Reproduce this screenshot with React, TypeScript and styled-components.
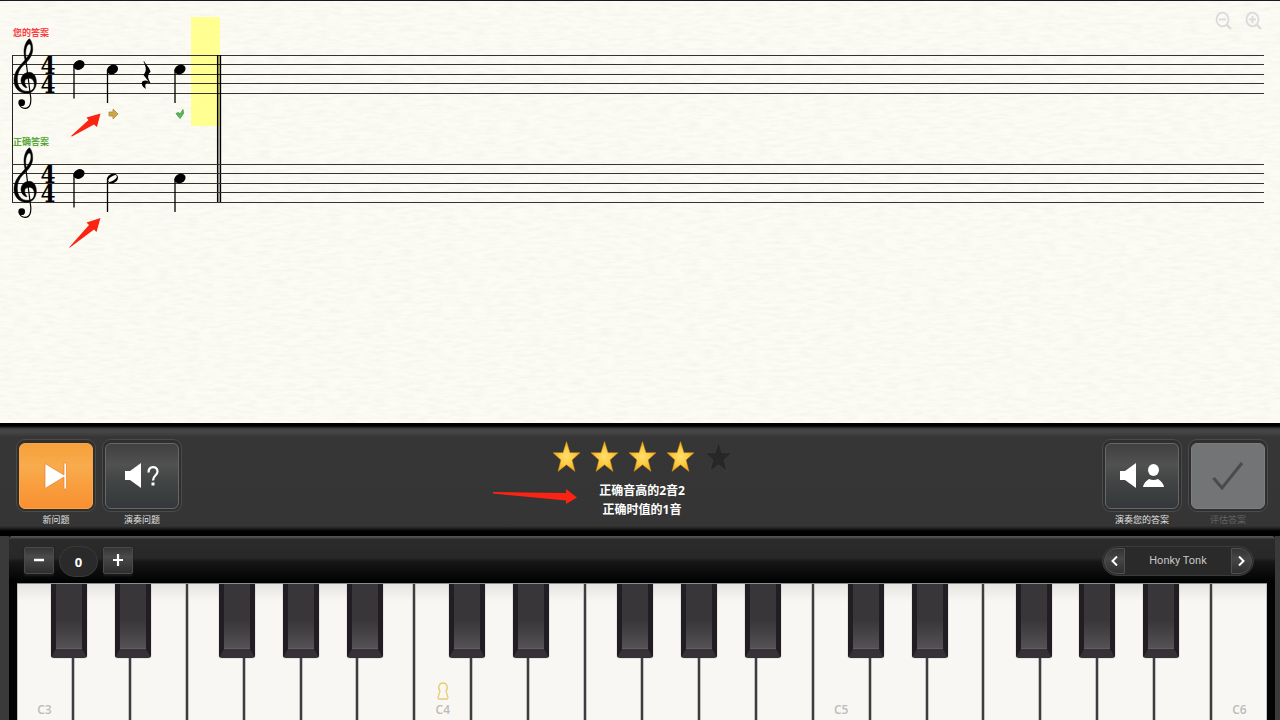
import React from 'react';
import styled, { createGlobalStyle, css } from 'styled-components';

const GlobalStyle = createGlobalStyle`
  * { box-sizing: border-box; }
  body {
    margin: 0;
    background: #000;
    font-family: 'Open Sans', 'Noto Sans CJK SC', sans-serif;
  }
  button { font: inherit; margin: 0; padding: 0; border: 0; cursor: pointer; }
`;

const Page = styled.div`
  display: flex;
  flex-direction: column;
  min-height: 100vh;
`;

/* ---------- Score ---------- */

const Score = styled.main`
  position: relative;
  flex: 1;
  overflow: hidden;
  padding: 25px 16px 0 12px;
  background: #fcfcf4;
  border-top: 1px solid #1b1828;
`;

const PaperGrain = styled.svg`
  position: absolute;
  inset: 0;
  width: 100%;
  height: 100%;
`;

const WindowTab = styled.div`
  position: absolute;
  z-index: 1;
  top: -1px;
  left: 48px;
  width: 42px;
  height: 1px;
  background: #a9a9ae;
`;

const ZoomTools = styled.div`
  position: absolute;
  top: 10px;
  right: 17px;
  display: flex;
  gap: 12px;
`;

const ZoomButton = styled.button`
  width: 18px;
  height: 20px;
  background: none;
  color: #dadade;
  svg { display: block; }
`;

const StaffBlock = styled.section`
  position: relative;
  height: 109px;
`;

const StaffTitle = styled.h2<{ $tone: string }>`
  margin: 0 0 0 1px;
  font-size: 9px;
  line-height: 14px;
  height: 14px;
  font-weight: 700;
  color: ${(p) => p.$tone};
`;

const StaffDrawing = styled.svg`
  display: block;
  width: 100%;
  height: 95px;
  overflow: visible;
`;

/* ---------- Control bar ---------- */

const ControlBar = styled.section`
  display: grid;
  grid-template-columns: 1fr auto 1fr;
  height: 113px;
  padding: 16px 12px 0 16px;
  background: linear-gradient(
    #000 0, #000 3px, #1c1c1c 4px, #424242 6px, #464646 9px, #363636 14px,
    #353535 103px, #191919 106px, #000 108px, #000 113px
  );
`;

const ButtonGroup = styled.div<{ $end?: boolean }>`
  display: flex;
  gap: 6px;
  justify-content: ${(p) => (p.$end ? 'flex-end' : 'flex-start')};
`;

const Action = styled.label<{ $dim?: boolean }>`
  display: flex;
  flex-direction: column;
  align-items: center;
  width: 80px;
  font-size: 9px;
  line-height: 14px;
  color: ${(p) => (p.$dim ? '#636363' : '#e2e2e2')};
`;

const faces = {
  orange: css`
    background: linear-gradient(#f6a03c 0%, #f8ac4c 35%, #f9a040 60%, #f89030 100%);
    border: 1px solid #fba645;
  `,
  dark: css`
    background: linear-gradient(#3f4041 0%, #515151 32%, #434546 55%, #34383a 100%);
    border: 1px solid #66696a;
  `,
  disabled: css`
    background: #737476;
    border: 1px solid #7d7e80;
  `,
};

const ActionRing = styled.span`
  display: block;
  padding: 3px 2px;
  margin-bottom: 1px;
  width: 80px;
  height: 73px;
  border: 1px solid #4b4b4b;
  border-radius: 9px;
  background: #2f2f2f;
`;

const ActionFace = styled.button<{ $face: keyof typeof faces }>`
  display: flex;
  align-items: center;
  justify-content: center;
  width: 100%;
  height: 66px;
  border-radius: 6px;
  ${(p) => faces[p.$face]}
`;

const Result = styled.div`
  position: relative;
  display: flex;
  flex-direction: column;
  align-items: center;
`;

const Stars = styled.div`
  display: flex;
  gap: 11px;
  height: 42px;
  padding-top: 2px;
`;

const ResultText = styled.p`
  margin: 0;
  font-size: 12px;
  line-height: 19px;
  font-weight: 700;
  text-align: center;
  color: #fff;
`;

const Pointer = styled.svg`
  position: absolute;
  top: 50px;
  left: -60px;
`;

/* ---------- Piano ---------- */

const Piano = styled.section`
  padding: 0 5px 0 9px;
  background: #3a3a3a;
`;

const PianoBody = styled.div`
  background: #030303;
`;

const PianoHeader = styled.div`
  display: flex;
  justify-content: space-between;
  align-items: center;
  height: 47px;
  padding: 3px 21px 0 15px;
  border-radius: 3px 3px 0 0;
  background: linear-gradient(#555 0, #484848 2px, #2b2b2b 3px, #282828 22px, #161616 26px, #080808 40px, #000 47px);
`;

const Octave = styled.div`
  display: flex;
  align-items: center;
  gap: 5px;
`;

const SmallButton = styled.button`
  display: flex;
  align-items: center;
  justify-content: center;
  width: 30px;
  height: 27px;
  margin-bottom: 2px;
  border: 1px solid #4a4a4a;
  border-radius: 2px;
  background: linear-gradient(#353535, #4a4a4a 35%, #2e2e2e);
  box-shadow: 0 2px 2px #1c1c1c;
`;

const OctaveValue = styled.output`
  width: 39px;
  height: 31px;
  border: 1px solid #3a3a3a;
  border-radius: 16px;
  background: #2a2a2a;
  color: #fff;
  font-size: 13px;
  line-height: 31px;
  font-weight: 700;
  text-align: center;
`;

const Instrument = styled.div`
  display: flex;
  align-items: center;
  justify-content: space-between;
  width: 152px;
  height: 30px;
  padding: 0 1px;
  margin-bottom: 1px;
  border: 1px solid #3b3b3b;
  border-radius: 15px;
  background: #2a2a2a;
  color: #c6c6c6;
  font-family: Roboto, 'Open Sans', sans-serif;
  font-size: 11px;
`;

const StepButton = styled.button<{ $side: 'left' | 'right' }>`
  display: flex;
  align-items: center;
  justify-content: center;
  width: 21px;
  height: 26px;
  border: 1px solid #505050;
  border-radius: ${(p) => (p.$side === 'left' ? '13px 1px 1px 13px' : '1px 13px 13px 1px')};
  background: linear-gradient(#333, #464646 40%, #303030);
`;

const Keyboard = styled.div`
  display: flex;
  height: 137px;
  margin: 0 8px;
  border-top: 1px solid #86908f;
  overflow: hidden;
`;

const WhiteKey = styled.div`
  position: relative;
  flex: 1;
  display: flex;
  flex-direction: column;
  align-items: center;
  justify-content: flex-end;
  background: linear-gradient(#e6e5e1, #f8f7f3 18px);
  border-right: 2px solid #3d3c3f;
  box-shadow: inset 1px 0 #c4c3c2, inset -1px 0 #c4c3c2;
  color: #bdbcba;
  font-size: 12px;
  line-height: 20px;
  font-weight: 600;
  &:last-child { border-right: 0; }
`;

const BlackKey = styled.div<{ $at: number }>`
  position: absolute;
  z-index: 1;
  top: 0;
  left: ${(p) => p.$at}%;
  width: 36px;
  height: 74px;
  border: solid #211d22;
  border-width: 0 5px 9px;
  border-bottom-color: #353136;
  border-radius: 0 0 3px 3px;
  background: linear-gradient(#393639 0, #393639 36px, #555356 66px);
  box-shadow: inset 0 -1px #605e61, 0 0 1px #555;
`;

const TrebleClef = () => (
  <svg x="1" y="-2" width="24" height="72" viewBox="0 0 72 216" overflow="visible">
    <path stroke="#000" strokeWidth="1.5" d="M49 2C56 8 60 22 59 36C58 54 46 68 35 78C20 92 13 105 13 125C13 147 26 160 43 160C57 160 64 153 64 139C64 129 58 121 48 121C40 121 35 126 35 132C35 139 38 144 42 148L40 150C31 146 24 138 24 128C24 113 36 103 49 103C62 103 70 116 70 132C70 152 58 166 41 166C19 166 3 150 3 127C3 105 14 90 28 75C40 62 54 46 54 30C54 22 52 18 49 18C43 18 38 32 38 44C38 50 39 58 40 64L36 66C34 58 33 50 33 42C33 24 40 8 49 2Z" />
    <path d="M38 62L52 170C56 194 52 211 36 211C28 211 22 206 20 200" fill="none" stroke="#000" strokeWidth="3.5" />
    <circle cx="26" cy="194" r="10" />
  </svg>
);

const Note = ({ x, y, open }: { x: number; y: number; open?: boolean }) => (
  <g>
    <ellipse cx={x} cy={y} rx="5.8" ry="4.6" transform={`rotate(-28 ${x} ${y})`} />
    {open && <ellipse cx={x} cy={y} rx="5" ry="2" fill="#fcfcf4" transform={`rotate(-34 ${x} ${y})`} />}
    <path d={`M${x - 5} ${y}V${y + 33.5}`} stroke="#000" strokeWidth="1.3" />
  </g>
);

/* Lines start 15 units below the drawing's top edge. */
const StaffLines = () => (
  <g stroke="#333" strokeWidth="1">
    {[15.5, 24.5, 34.5, 43.5, 53.5].map((y) => (
      <line key={y} x1="0" x2="100%" y1={y} y2={y} />
    ))}
  </g>
);

const TimeSignature = () => (
  <g fontFamily="'DejaVu Serif Condensed', 'DejaVu Serif', serif" fontWeight="700" fontSize="24" textAnchor="middle">
    <text x="36" y="34">4</text>
    <text x="36" y="53">4</text>
  </g>
);

const RedArrow = ({ d }: { d: string }) => <path d={d} fill="#fb2413" />;

const Speaker = () => <path d="M0 8h5L16 0v25L5 17H0z" fill="#fff" />;

const STAR = 'M14 0L17.6 11.5H28L19.8 19L22.8 31L14 24L5.2 31L8.2 19L0 11.5H10.4Z';

const Star = ({ on }: { on: boolean }) => (
  <svg width="27" height="32" viewBox="0 0 28 32" aria-hidden="true">
    <defs>
      <radialGradient id="gold" cx="50%" cy="50%" r="55%">
        <stop offset="0" stopColor="#ffe070" />
        <stop offset="0.5" stopColor="#fecb40" />
        <stop offset="1" stopColor="#f5a514" />
      </radialGradient>
    </defs>
    <path d={STAR} fill={on ? 'url(#gold)' : '#272727'} stroke={on ? '#c98f1e' : '#474747'} strokeWidth="0.5" />
  </svg>
);

const BLACK_OFFSETS: Record<string, number> = { C: 62, D: 75, F: 57, G: 69, A: 82 };
const KEYS = Array.from({ length: 22 }, (_, i) => ({ name: 'CDEFGAB'[i % 7], octave: 3 + Math.floor(i / 7) }));

export default function App() {
  return (
    <Page>
      <GlobalStyle />
      <Score>
        <PaperGrain aria-hidden="true">
          <filter id="grain" x="0" y="0" width="100%" height="100%">
            <feTurbulence type="fractalNoise" baseFrequency="0.07 0.32" numOctaves="3" seed="4" />
            <feColorMatrix values="0 0 0 0 0.72  0 0 0 0 0.72  0 0 0 0 0.66  0.45 0 0 0 -0.16" />
          </filter>
          <rect width="100%" height="100%" filter="url(#grain)" />
        </PaperGrain>
        <WindowTab />

        <StaffBlock>
          <StaffTitle $tone="#fb3d41">您的答案</StaffTitle>
          <StaffDrawing role="img" aria-label="您的答案">
            <rect x="179" y="-23" width="29" height="109" fill="#ffff80" fillOpacity="0.85" />
            <StaffLines />
            <path d="M0.5 15V163" stroke="#222" />
            <path d="M205.7 15V163M208.4 15V163" stroke="#000" strokeWidth="1.5" />
            <TrebleClef />
            <TimeSignature />
            <Note x={67} y={25} />
            <Note x={100.5} y={29.5} />
            <path d="M132 21C134 25 138 28 138.500 32C136 34 135 37 138 42L138.500 43.500C135 41.500 132 43 134 49C129 46 129 42 131 41C133 40 135 40.500 136.500 41.500L131.500 35C134.500 31 134.500 28 131.500 21.500Z" />
            <Note x={168} y={29.5} />
            <path d="M97 72H101V69L106 74L101 79V76H97Z" fill="#cfa845" stroke="#a98c40" strokeWidth="0.8" />
            <path d="M164 73.500L166.500 72.500L168 74L171 69.500L171.500 73.500L168 78.500Z" fill="#58bb5a" stroke="#43924a" strokeWidth="0.8" />
            <RedArrow d="M59 96L76.500 80L74.500 77.500L88.500 73.500L85 87L82 84.500L60 96.500Z" />
          </StaffDrawing>
        </StaffBlock>

        <StaffBlock>
          <StaffTitle $tone="#56a83a">正确答案</StaffTitle>
          <StaffDrawing role="img" aria-label="正确答案">
            <StaffLines />
            <TrebleClef />
            <TimeSignature />
            <Note x={67} y={25} />
            <Note x={100.5} y={29.5} open />
            <Note x={168} y={29.5} />
            <RedArrow d="M57 98.500L77 76L74.500 73.500L88.500 69L84.500 83L82 80.500L58 98.500Z" />
          </StaffDrawing>
        </StaffBlock>

        <ZoomTools>
          {['缩小', '放大'].map((name, i) => (
            <ZoomButton key={name} aria-label={name}>
              <svg width="18" height="20" viewBox="0 0 18 20" fill="none" stroke="currentColor">
                <ellipse cx="7.500" cy="8.500" rx="6" ry="6.800" strokeWidth="1.800" />
                <path d="M11.500 13.500L16 18" strokeWidth="2.400" />
                <path d={i ? 'M4 8.500H11M7.500 5V12' : 'M4 8.500H11'} strokeWidth="1.800" />
              </svg>
            </ZoomButton>
          ))}
        </ZoomTools>
      </Score>

      <ControlBar>
        <ButtonGroup>
          <Action>
            <ActionRing>
              <ActionFace $face="orange">
                <svg width="24" height="28" viewBox="0 0 24 28">
                  <path d="M1 1.500L20 13V1H22.500V27H20V15L1 26.500Z" fill="#fff" stroke="#ed7d2b" strokeWidth="0.700" />
                </svg>
              </ActionFace>
            </ActionRing>
            新问题
          </Action>
          <Action>
            <ActionRing>
              <ActionFace $face="dark">
                <svg width="34" height="26" viewBox="0 0 34 26">
                  <Speaker />
                  <path d="M23.500 9.500C23.500 2.500 32.500 2.500 32.500 8.500C32.500 12.500 28 12 28 17.500" fill="none" stroke="#fff" strokeWidth="2.200" />
                  <rect x="26.500" y="19.500" width="3" height="3" fill="#fff" />
                </svg>
              </ActionFace>
            </ActionRing>
            演奏问题
          </Action>
        </ButtonGroup>

        <Result>
          <Stars role="img" aria-label="4 / 5">
            {[1, 2, 3, 4, 5].map((n) => <Star key={n} on={n < 5} />)}
          </Stars>
          <ResultText>正确音高的2音2<br />正确时值的1音</ResultText>
          <Pointer width="84" height="16" viewBox="0 0 84 16" aria-hidden="true">
            <RedArrow d="M0 3L73 4V0L84 8.500L73 15V11.500L0 4.500Z" />
          </Pointer>
        </Result>

        <ButtonGroup $end>
          <Action>
            <ActionRing>
              <ActionFace $face="dark">
                <svg width="44" height="26" viewBox="0 0 44 26">
                  <Speaker />
                  <ellipse cx="33.500" cy="7" rx="5.500" ry="6" fill="#fff" />
                  <path d="M29 16Q33.500 18 38 16Q43 19 44 24H23Q24 19 29 16Z" fill="#fff" />
                </svg>
              </ActionFace>
            </ActionRing>
            演奏您的答案
          </Action>
          <Action $dim>
            <ActionRing>
              <ActionFace $face="disabled" disabled>
                <svg width="32" height="28" viewBox="0 0 32 28">
                  <path d="M1.500 16L10 26L30 1" fill="none" stroke="#4b4b4c" strokeWidth="3" />
                </svg>
              </ActionFace>
            </ActionRing>
            评估答案
          </Action>
        </ButtonGroup>
      </ControlBar>

      <Piano>
        <PianoBody>
          <PianoHeader>
            <Octave>
              <SmallButton aria-label="-">
                <svg width="12" height="12"><path d="M1 6H11" stroke="#fff" strokeWidth="2.500" /></svg>
              </SmallButton>
              <OctaveValue>0</OctaveValue>
              <SmallButton aria-label="+">
                <svg width="12" height="12"><path d="M1 6H11M6 0V12" stroke="#fff" strokeWidth="2.200" /></svg>
              </SmallButton>
            </Octave>
            <Instrument>
              <StepButton $side="left" aria-label="‹">
                <svg width="7" height="10"><path d="M6 0.500L1.500 5L6 9.500" fill="none" stroke="#fff" strokeWidth="2" /></svg>
              </StepButton>
              <span>Honky Tonk</span>
              <StepButton $side="right" aria-label="›">
                <svg width="7" height="10"><path d="M1 0.500L5.500 5L1 9.500" fill="none" stroke="#fff" strokeWidth="2" /></svg>
              </StepButton>
            </Instrument>
          </PianoHeader>
          <Keyboard>
            {KEYS.map(({ name, octave }, i) => (
              <WhiteKey key={i}>
                {name in BLACK_OFFSETS && i < 21 && <BlackKey $at={BLACK_OFFSETS[name]} />}
                {name === 'C' && octave === 4 && (
                  <svg width="12" height="18" viewBox="0 0 12 18" aria-hidden="true">
                    <path d="M3 9C0 5.500 2.500 1 6 1C9.500 1 12 5.500 9 9L11 15.500Q11 17 10 17H2Q1 17 1 15.500Z" fill="none" stroke="#e8cc72" strokeWidth="1.300" />
                  </svg>
                )}
                {name === 'C' && <span>{name}{octave}</span>}
              </WhiteKey>
            ))}
          </Keyboard>
        </PianoBody>
      </Piano>
    </Page>
  );
}
